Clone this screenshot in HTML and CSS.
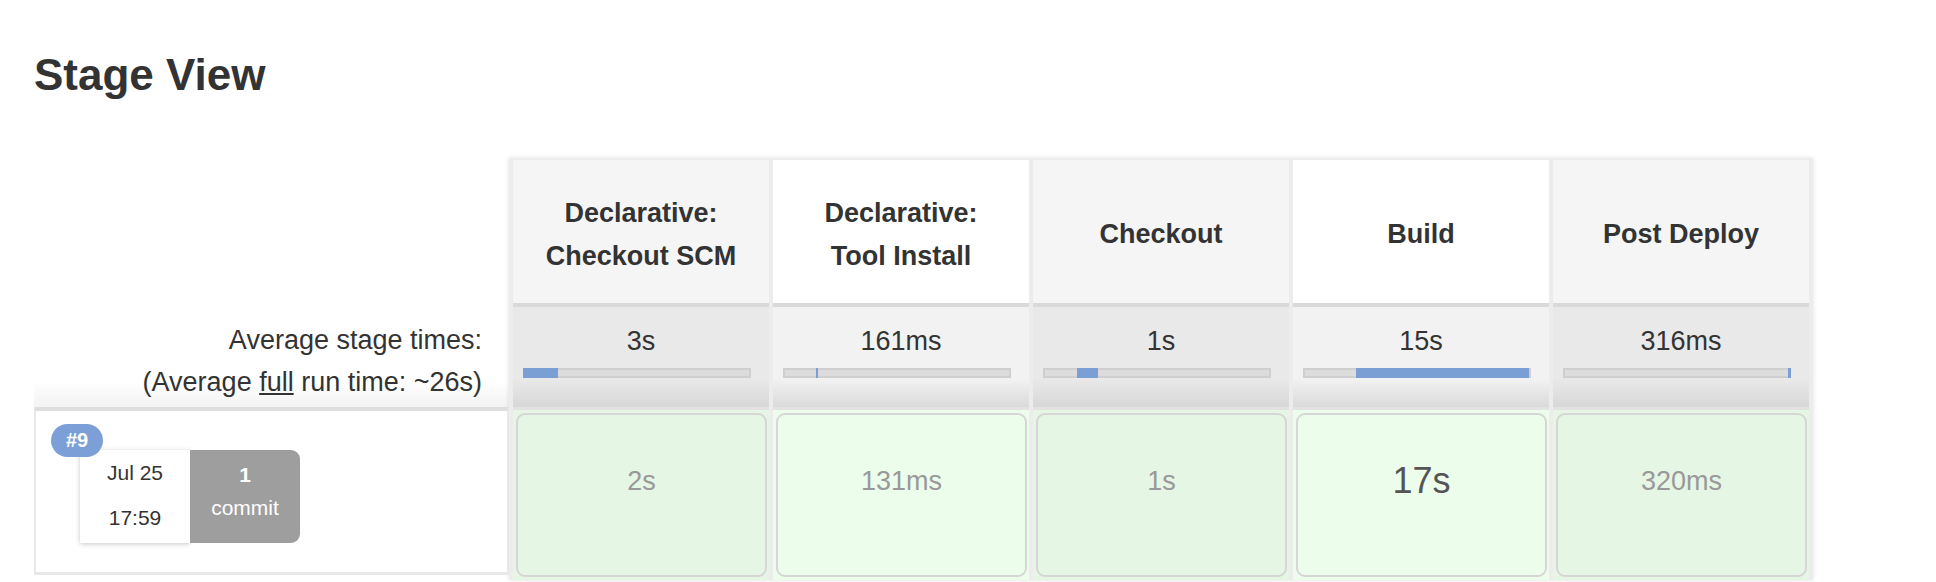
FILE: index.html
```html
<!DOCTYPE html>
<html>
<head>
<meta charset="utf-8">
<link rel="stylesheet" href="styles.css">
</head>
<body>
<div class="page">
  <h2 class="title">Stage View</h2>
  <div class="view">
    <div class="labels">
      <div class="label-head"></div>
      <div class="label-avg">
        <div>Average stage times:</div>
        <div>(Average <u>full</u> run time: ~26s)</div>
      </div>
      <div class="run-label">
        <span class="badge">#9</span>
        <div class="run-info">
          <div class="date"><div>Jul 25</div><div>17:59</div></div>
          <div class="commits"><div class="num">1</div><div>commit</div></div>
        </div>
      </div>
    </div>
    <div class="stages">
      <div class="col odd">
        <div class="head">Declarative:<br>Checkout SCM</div>
        <div class="avg"><div class="avg-time">3s</div><div class="bar"><span class="fill" style="margin-left:0px;width:35px"></span></div></div>
        <div class="run"><div class="box">2s</div></div>
      </div>
      <div class="col even">
        <div class="head">Declarative:<br>Tool Install</div>
        <div class="avg"><div class="avg-time">161ms</div><div class="bar"><span class="fill" style="margin-left:33px;width:2px"></span></div></div>
        <div class="run"><div class="box">131ms</div></div>
      </div>
      <div class="col odd">
        <div class="head">Checkout</div>
        <div class="avg"><div class="avg-time">1s</div><div class="bar"><span class="fill" style="margin-left:34px;width:21px"></span></div></div>
        <div class="run"><div class="box">1s</div></div>
      </div>
      <div class="col even">
        <div class="head">Build</div>
        <div class="avg"><div class="avg-time">15s</div><div class="bar"><span class="fill" style="margin-left:53px;width:173px"></span></div></div>
        <div class="run"><div class="box big">17s</div></div>
      </div>
      <div class="col odd">
        <div class="head">Post Deploy</div>
        <div class="avg"><div class="avg-time">316ms</div><div class="bar"><span class="fill" style="margin-left:225px;width:3px"></span></div></div>
        <div class="run"><div class="box">320ms</div></div>
      </div>
    </div>
  </div>
</div>
</body>
</html>
```
FILE: styles.css
```css
html, body {
  margin: 0;
  padding: 0;
  background: #ffffff;
}
body {
  font-family: "Liberation Sans", Arial, Helvetica, sans-serif;
  color: #333333;
  overflow: hidden;
  height: 582px;
}
.page {
  padding: 49px 0 0 34px;
}
.title {
  margin: 0;
  font-size: 44px;
  line-height: 52px;
  font-weight: bold;
  color: #333333;
}
.view {
  margin-top: 57px;
  display: flex;
  align-items: flex-start;
}
.labels {
  width: 475px;
  display: flex;
  flex-direction: column;
}
.label-head {
  height: 147px;
}
.label-avg {
  height: 102px;
  box-sizing: border-box;
  padding: 0 27px 4px 0;
  display: flex;
  flex-direction: column;
  justify-content: flex-end;
  align-items: flex-end;
  font-size: 27px;
  line-height: 42px;
  color: #333333;
  background: linear-gradient(to bottom, #ffffff 0%, #ffffff 75%, #f3f3f3 100%);
}
.run-label {
  position: relative;
  height: 168px;
  box-sizing: border-box;
  border-left: 2px solid #e8e8e8;
  border-right: 2px solid #e8e8e8;
  border-top: 4px solid #dedede;
  border-bottom: 3px solid #e8e8e8;
  padding: 39px 0 0 44px;
  background: #ffffff;
}
.badge {
  position: absolute;
  left: 15px;
  top: 13px;
  z-index: 2;
  width: 52px;
  height: 33px;
  border-radius: 17px;
  background: #7b9fd6;
  color: #ffffff;
  font-weight: bold;
  font-size: 20px;
  line-height: 33px;
  text-align: center;
}
.run-info {
  display: flex;
}
.date {
  width: 110px;
  height: 93px;
  background: #ffffff;
  box-shadow: 0 1px 5px rgba(0, 0, 0, 0.22);
  text-align: center;
  font-size: 21px;
  line-height: 45px;
  color: #333333;
}
.commits {
  width: 110px;
  height: 93px;
  box-sizing: border-box;
  padding-top: 8px;
  background: #9e9e9e;
  border-radius: 0 9px 9px 0;
  color: #ffffff;
  text-align: center;
  font-size: 21px;
  line-height: 33px;
}
.commits .num {
  font-weight: bold;
}
.stages {
  display: flex;
  gap: 4px;
  background: #ececec;
  border: 4px solid #ececec;
  border-top-width: 2px;
  border-bottom: none;
  box-shadow: 0 0 5px rgba(0, 0, 0, 0.12);
}
.col {
  width: 256px;
  display: flex;
  flex-direction: column;
}
.head {
  height: 143px;
  box-sizing: border-box;
  padding-top: 6px;
  display: flex;
  align-items: center;
  justify-content: center;
  text-align: center;
  font-weight: bold;
  font-size: 27px;
  line-height: 43px;
  color: #333333;
}
.odd .head { background: #f5f5f5; }
.even .head { background: #ffffff; }
.avg {
  height: 104px;
  box-sizing: border-box;
  border-top: 4px solid #d9d9d9;
  padding-top: 13px;
  text-align: center;
}
.odd .avg { background: linear-gradient(to bottom, #e9e9e9 0%, #e9e9e9 72%, #d7d7d7 100%); }
.even .avg { background: linear-gradient(to bottom, #f2f2f2 0%, #f2f2f2 72%, #dadada 100%); }
.avg-time {
  font-size: 27px;
  line-height: 42px;
  color: #333333;
}
.bar {
  margin: 6px 0 0 10px;
  width: 228px;
  height: 10px;
  display: flex;
  background: #dcdcdc;
  box-shadow: inset 0 0 0 2px #cfcfcf;
}
.fill {
  display: block;
  height: 10px;
  background: #7a9fd5;
}
.run {
  height: 173px;
  box-sizing: border-box;
  border-top: 3px solid #e2e2e2;
  padding: 3px 2px 3px 3px;
}
.odd .run { background: #e6f6e4; }
.even .run { background: #edfdeb; }
.box {
  height: 164px;
  box-sizing: border-box;
  border: 2px solid #d6d6d6;
  border-radius: 9px;
  padding-top: 45px;
  text-align: center;
  font-size: 27px;
  line-height: 42px;
  color: #999999;
}
.odd .box { background: #e6f6e4; }
.even .box { background: #edfdeb; }
.box.big {
  font-size: 36px;
  color: #555555;
}
```
